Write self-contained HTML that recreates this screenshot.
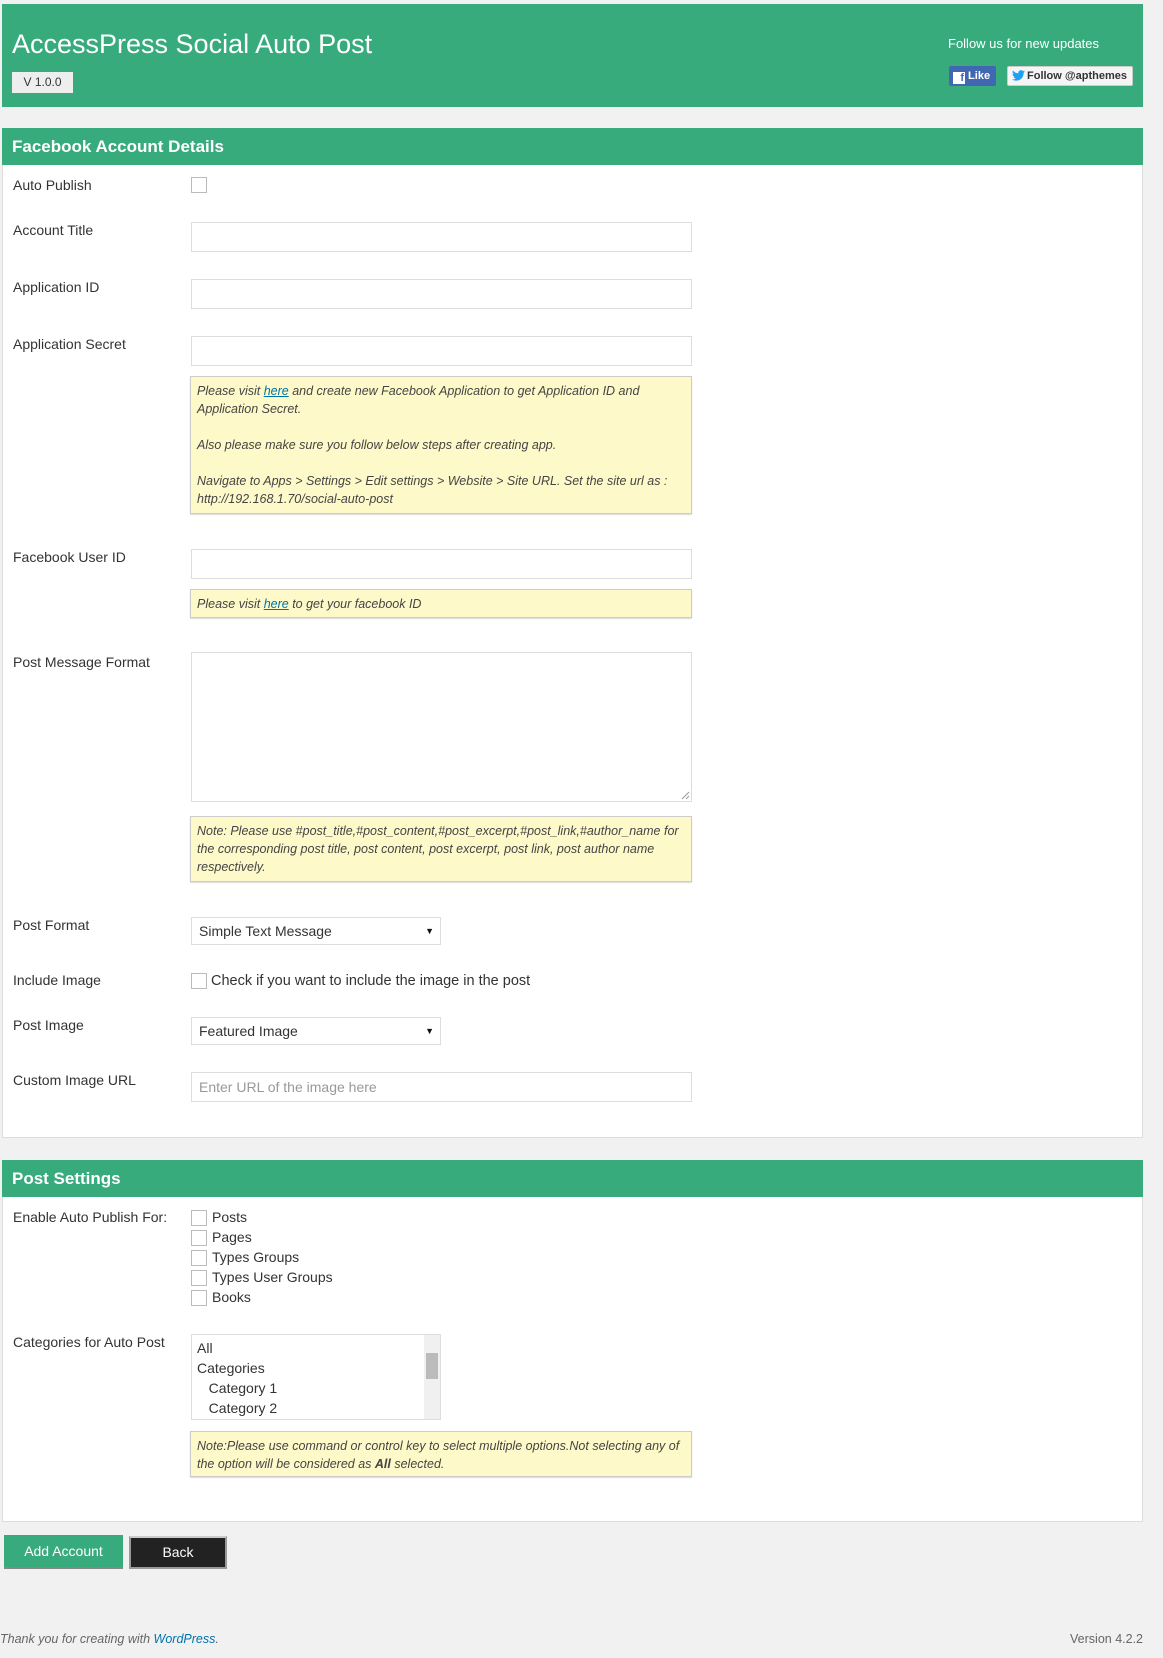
<!DOCTYPE html>
<html><head><meta charset="utf-8"><style>
*{box-sizing:border-box;margin:0;padding:0}
body{width:1163px;height:1658px;background:#f1f1f1;font-family:"Liberation Sans",sans-serif;color:#444;position:relative;overflow:hidden;font-size:14px}
.a{position:absolute}
.hdr{left:2px;top:4px;width:1141px;height:103px;background:#38ab7d}
.sec{left:2px;width:1141px;background:#fff;border:1px solid #ddd}
.sh{left:2px;width:1141px;height:37px;background:#38ab7d;color:#fff;font-size:17px;line-height:37px;padding-left:10px;font-weight:bold}
.lb{left:13px;font-size:14px;color:#333}
.in{left:191px;width:501px;height:30px;background:#fff;border:1px solid #ddd}
.note{left:190px;width:502px;background:#fef9c9;border:1px solid #ccc;box-shadow:0 1px 1px rgba(0,0,0,.15);font-style:italic;font-size:12.5px;line-height:18px;padding:5px 6px;color:#444}
.note a{color:#0073aa;text-decoration:underline}
.cb{width:16px;height:16px;border:1px solid #bbb;background:#fff;left:191px}
.sel{left:191px;width:250px;height:28px;border:1px solid #ddd;background:#fff;padding-left:7px;line-height:26px;font-size:14px;color:#333}
.sel:after{content:"▼";position:absolute;right:6px;top:0;font-size:9px;color:#111}
</style></head><body>
<div class="a hdr"></div>
<div class="a" style="left:12px;top:29px;color:#fff;font-size:27px;">AccessPress Social Auto Post</div>
<div class="a" style="left:12px;top:72px;width:61px;height:21px;background:#eee;color:#333;font-size:12px;line-height:21px;text-align:center">V 1.0.0</div>
<div class="a" style="left:948px;top:36px;color:#fff;font-size:13px">Follow us for new updates</div>
<div class="a" style="left:949px;top:66px;width:47px;height:20px;background:#4267b2;border-radius:2px;color:#fff;font-size:11px;font-weight:bold;line-height:20px;padding-left:4px"><span style="display:inline-block;width:12px;height:12px;background:#fff;color:#4267b2;font-size:11px;line-height:13px;text-align:right;padding-right:1px;vertical-align:-2px">f</span> Like</div>
<div class="a" style="left:1007px;top:66px;width:126px;height:20px;background:#f5f5f5;border:1px solid #ccc;border-radius:2px;color:#333;font-size:11px;font-weight:bold;line-height:18px;padding-left:4px"><svg width="13" height="11" viewBox="0 0 24 20" style="vertical-align:-2px;margin-right:2px"><path fill="#1da1f2" d="M24 2.4a9.8 9.8 0 0 1-2.8.8A4.9 4.9 0 0 0 23.3.5a9.9 9.9 0 0 1-3.1 1.2A4.9 4.9 0 0 0 11.8 6 14 14 0 0 1 1.7.9a4.9 4.9 0 0 0 1.5 6.6A4.9 4.9 0 0 1 1 6.9a4.9 4.9 0 0 0 3.9 4.8 4.9 4.9 0 0 1-2.2.1 4.9 4.9 0 0 0 4.6 3.4A9.9 9.9 0 0 1 0 17.3 14 14 0 0 0 7.5 19.5c9 0 14-7.5 14-14v-.6A10 10 0 0 0 24 2.4z"/></svg>Follow @apthemes</div>

<div class="a sec" style="top:128px;height:1010px"></div>
<div class="a sh" style="top:128px">Facebook Account Details</div>
<div class="a lb" style="top:177px">Auto Publish</div><div class="a cb" style="top:177px"></div>
<div class="a lb" style="top:222px">Account Title</div><div class="a in" style="top:222px"></div>
<div class="a lb" style="top:279px">Application ID</div><div class="a in" style="top:279px"></div>
<div class="a lb" style="top:336px">Application Secret</div><div class="a in" style="top:336px"></div>
<div class="a note" style="top:376px;height:138px">Please visit <a>here</a> and create new Facebook Application to get Application ID and Application Secret.<br><br>Also please make sure you follow below steps after creating app.<br><br>Navigate to Apps &gt; Settings &gt; Edit settings &gt; Website &gt; Site URL. Set the site url as : http://192.168.1.70/social-auto-post</div>
<div class="a lb" style="top:549px">Facebook User ID</div><div class="a in" style="top:549px"></div>
<div class="a note" style="top:589px;height:29px">Please visit <a>here</a> to get your facebook ID</div>
<div class="a lb" style="top:654px">Post Message Format</div><div class="a in" style="top:652px;height:150px"><svg class="a" style="right:1px;bottom:1px" width="9" height="9"><path d="M8 1L1 8M8 5L5 8" stroke="#999"/></svg></div>
<div class="a note" style="top:816px;height:66px">Note: Please use #post_title,#post_content,#post_excerpt,#post_link,#author_name for the corresponding post title, post content, post excerpt, post link, post author name respectively.</div>
<div class="a lb" style="top:917px">Post Format</div><div class="a sel" style="top:917px">Simple Text Message</div>
<div class="a lb" style="top:972px">Include Image</div><div class="a cb" style="top:973px"></div>
<div class="a" style="left:211px;top:973px;font-size:14.5px;color:#333">Check if you want to include the image in the post</div>
<div class="a lb" style="top:1017px">Post Image</div><div class="a sel" style="top:1017px">Featured Image</div>
<div class="a lb" style="top:1072px">Custom Image URL</div><div class="a in" style="top:1072px;padding-left:7px;line-height:28px;color:#999">Enter URL of the image here</div>

<div class="a sec" style="top:1160px;height:362px"></div>
<div class="a sh" style="top:1160px">Post Settings</div>
<div class="a lb" style="top:1209px">Enable Auto Publish For:</div>
<div class="a cb" style="top:1210px"></div><div class="a" style="left:212px;top:1209px;color:#333">Posts</div>
<div class="a cb" style="top:1230px"></div><div class="a" style="left:212px;top:1229px;color:#333">Pages</div>
<div class="a cb" style="top:1250px"></div><div class="a" style="left:212px;top:1249px;color:#333">Types Groups</div>
<div class="a cb" style="top:1270px"></div><div class="a" style="left:212px;top:1269px;color:#333">Types User Groups</div>
<div class="a cb" style="top:1290px"></div><div class="a" style="left:212px;top:1289px;color:#333">Books</div>
<div class="a lb" style="top:1334px">Categories for Auto Post</div>
<div class="a" style="left:191px;top:1334px;width:250px;height:86px;border:1px solid #ddd;background:#fff;font-size:14px;color:#333;line-height:20px;padding:3px 5px">All<br>Categories<br>&nbsp;&nbsp;&nbsp;Category 1<br>&nbsp;&nbsp;&nbsp;Category 2
<div class="a" style="right:0;top:0;width:16px;height:84px;background:#f0f0f0"><div class="a" style="left:2px;top:18px;width:12px;height:26px;background:#bbb"></div></div></div>
<div class="a note" style="top:1431px;height:46px">Note:Please use command or control key to select multiple options.Not selecting any of the option will be considered as <b>All</b> selected.</div>

<div class="a" style="left:4px;top:1535px;width:119px;height:34px;background:#38ab7d;border-bottom:2px solid #888;color:#fff;font-size:14px;line-height:32px;text-align:center">Add Account</div>
<div class="a" style="left:129px;top:1536px;width:98px;height:33px;background:#222;border:2px solid #999;border-top-color:#ccc;color:#fff;font-size:14px;line-height:29px;text-align:center">Back</div>
<div class="a" style="left:0;top:1632px;font-size:12.5px;font-style:italic;color:#666">Thank you for creating with <span style="color:#0073aa">WordPress</span>.</div>
<div class="a" style="right:20px;top:1632px;font-size:12.5px;color:#666">Version 4.2.2</div>
</body></html>
